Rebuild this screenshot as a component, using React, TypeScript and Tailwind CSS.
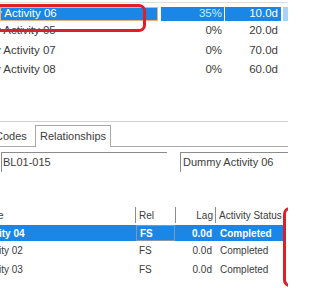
const blue = "bg-[#1a86e6]";

type TopRowProps = {
  name: string;
  pct: string;
  dur: string;
  selected?: boolean;
  height: string;
};

function TopRow({ name, pct, dur, selected, height }: TopRowProps) {
  return (
    <div className={`flex ${height} items-center text-[11.5px]`}>
      <div
        className={`flex h-full w-[158px] shrink-0 items-center overflow-hidden ${
          selected ? `${blue} border border-[#e6b47c] text-white` : ""
        }`}
      >
        <span className="ml-[-5px] whitespace-nowrap">y {name}</span>
      </div>
      <div
        className={`ml-[3px] flex h-full w-[63px] shrink-0 items-center justify-end pr-[2px] ${
          selected ? `${blue} text-[#c6f0ff]` : ""
        }`}
      >
        {pct}
      </div>
      <div
        className={`ml-px flex h-full w-[56px] shrink-0 items-center justify-end pr-[3px] ${
          selected ? `${blue} text-white` : ""
        }`}
      >
        {dur}
      </div>
      <div
        className={`ml-[2px] h-full flex-1 ${selected ? "bg-[#a9d2f5]" : ""}`}
      />
    </div>
  );
}

type RelRowProps = {
  name: string;
  selected?: boolean;
  height: string;
};

function RelRow({ name, selected, height }: RelRowProps) {
  return (
    <div
      className={`flex ${height} w-[283px] items-center text-[10px] ${
        selected ? `${blue} font-bold text-white` : ""
      }`}
    >
      <div className="w-[136px] shrink-0 overflow-hidden whitespace-nowrap">
        <span className="ml-[-1px]">{name}</span>
      </div>
      <div
        className={`flex h-full w-[39px] shrink-0 items-center pl-[3px] ${
          selected ? "my-px border border-[#8a97a8]" : ""
        }`}
      >
        FS
      </div>
      <div className="w-[40px] shrink-0 pr-[3px] text-right">0.0d</div>
      <div className="flex-1 pl-[5px] whitespace-nowrap">Completed</div>
    </div>
  );
}

export default function App() {
  return (
    <div className="relative h-[288px] w-[288px] overflow-hidden bg-white font-['Liberation_Sans',Arial,sans-serif] text-[#3c3c3c]">
      {/* activity grid */}
      <div className="h-[2px]" />
      <div className="h-px bg-[#dedede]" />
      <div className="h-[4px]" />
      <TopRow name="Activity 06" pct="35%" dur="10.0d" selected height="h-[14px]" />
      <TopRow name="Activity 05" pct="0%" dur="20.0d" height="h-[19px]" />
      <TopRow name="Activity 07" pct="0%" dur="70.0d" height="h-[21px]" />
      <TopRow name="Activity 08" pct="0%" dur="60.0d" height="h-[18px]" />

      <div className="h-[42px]" />
      <div className="h-px bg-[#d2d2d2]" />
      <div className="h-[3px]" />

      {/* tabs */}
      <div className="flex h-[22px] text-[11px]">
        <div className="flex w-[35px] shrink-0 items-center overflow-hidden whitespace-nowrap border-b border-[#a8a8a8] pt-[2px]">
          <span className="ml-[-5px]">Codes</span>
        </div>
        <div className="flex w-[76px] shrink-0 items-center border-x border-t border-[#a8a8a8] pl-[4px]">
          Relationships
        </div>
        <div className="flex-1 border-b border-[#a8a8a8]" />
      </div>

      {/* fields */}
      <div className="h-[5px]" />
      <div className="flex h-[20px] text-[11px]">
        <div className="ml-px flex w-[166px] items-center border-l border-t border-[#8c8c8c] pl-[1px]">
          BL01-015
        </div>
        <div className="ml-[13px] flex flex-1 items-center border-l border-t border-[#8c8c8c] pl-[2px] whitespace-nowrap">
          Dummy Activity 06
        </div>
      </div>

      {/* relationships grid */}
      <div className="h-[35px]" />
      <div className="flex h-[16px] items-center text-[10px]">
        <div className="w-[135px] shrink-0 overflow-hidden">
          <span className="ml-[-2px]">e</span>
        </div>
        <div className="h-full w-px bg-[#8c8c8c]" />
        <div className="w-[39px] shrink-0 pl-[3px]">Rel</div>
        <div className="h-full w-px bg-[#8c8c8c]" />
        <div className="w-[39px] shrink-0 pr-[2px] text-right">Lag</div>
        <div className="h-full w-px bg-[#8c8c8c]" />
        <div className="flex-1 pl-[3px] whitespace-nowrap">Activity Status</div>
      </div>
      <div className="h-[2px]" />
      <RelRow name="ity 04" selected height="h-[16px]" />
      <RelRow name="ity 02" height="h-[19px]" />
      <RelRow name="ity 03" height="h-[18px]" />

      {/* red callouts */}
      <div className="pointer-events-none absolute left-[-20px] top-[4px] h-[28px] w-[166px] rounded-[7px] border-[3px] border-[#e01e2a]" />
      <div className="pointer-events-none absolute left-[283px] top-[207px] h-[80px] w-[30px] rounded-[7px] border-[3px] border-[#e01e2a]" />
    </div>
  );
}
